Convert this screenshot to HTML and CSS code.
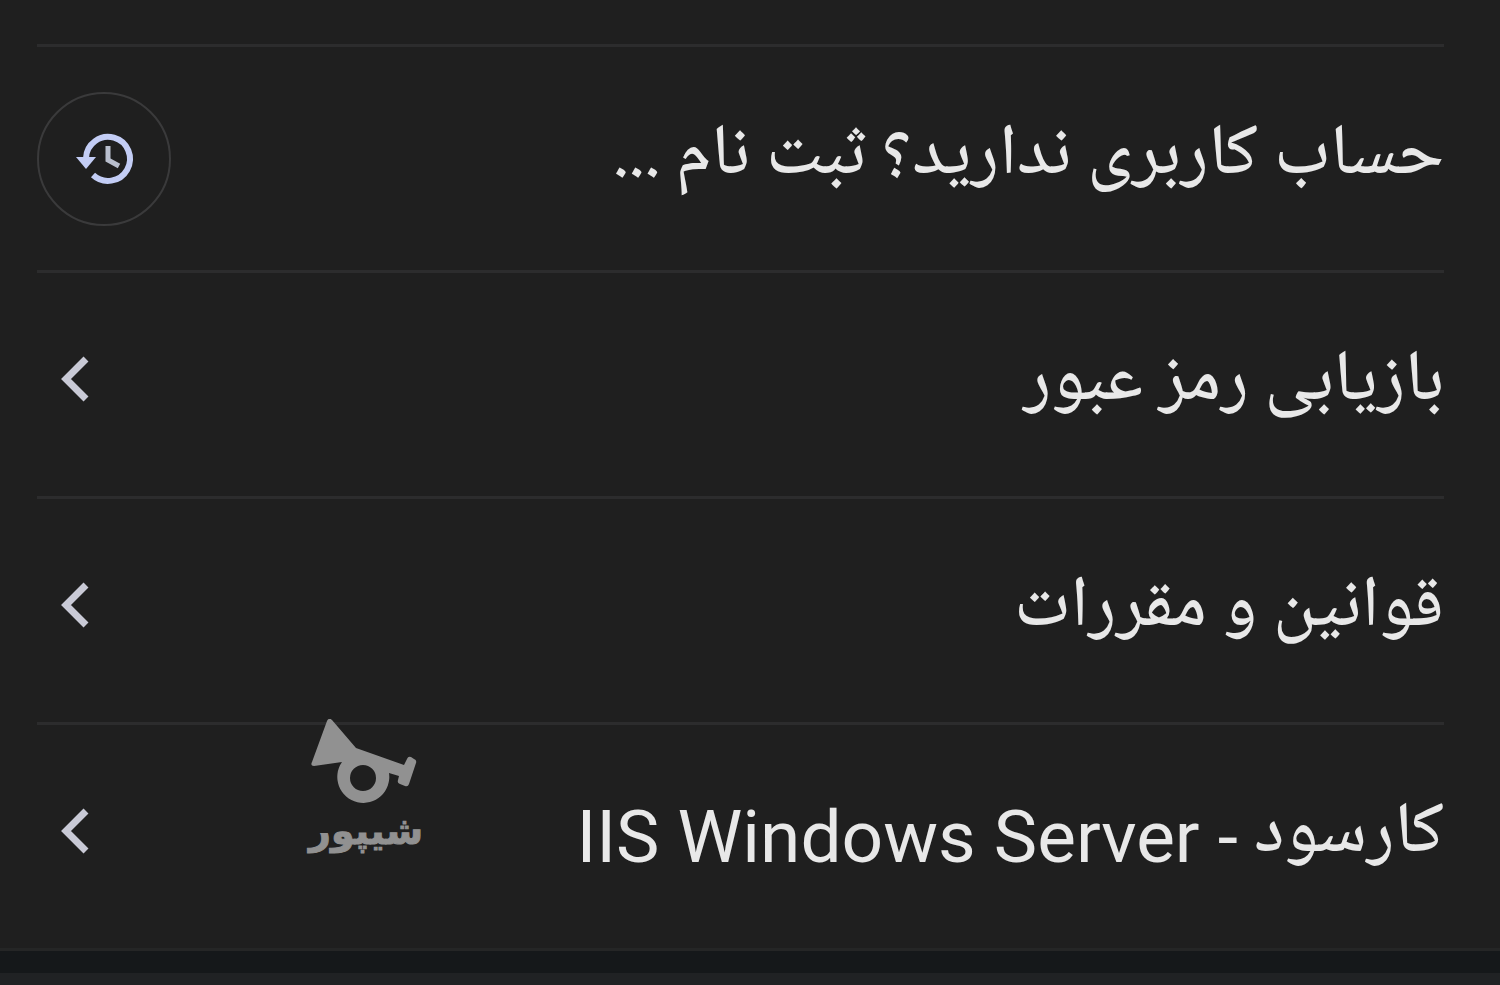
FILE: index.html
```html
<!DOCTYPE html>
<html lang="fa" dir="rtl">
<head>
    <meta charset="UTF-8">
    <meta name="viewport" content="width=device-width, initial-scale=1.0">
    <title>کارسود</title>
    <link rel="stylesheet" href="styles.css">
</head>
<body>
    <main class="results">
        <ul class="link-list">
            <li class="link-item">
                <a class="link-text" href="#">حساب کاربری ندارید؟ ثبت نام ...</a>
                <button class="history-btn" type="button" aria-label="تاریخچه">
                    <svg width="64" height="64" viewBox="-2 1 64 64" fill="none">
                        <path d="M12 32A22 22 0 1 1 19 49" stroke="#c3cdf5" stroke-width="6"/>
                        <path d="M2 31h20L12 43z" fill="#c3cdf5"/>
                        <path d="M34 20v14l11 6" stroke="#b9bfcd" stroke-width="5"/>
                    </svg>
                </button>
            </li>
            <li class="link-item">
                <a class="link-text" href="#">بازیابی رمز عبور</a>
                <svg class="chevron" width="32" height="48" viewBox="0 0 32 48"><path d="M27 4L7 24l20 20"/></svg>
            </li>
            <li class="link-item">
                <a class="link-text" href="#">قوانین و مقررات</a>
                <svg class="chevron" width="32" height="48" viewBox="0 0 32 48"><path d="M27 4L7 24l20 20"/></svg>
            </li>
            <li class="link-item">
                <a class="link-text" href="#">
                    <span>کارسود</span>
                    <span class="latin">- IIS Windows Server</span>
                </a>
                <svg class="chevron" width="32" height="48" viewBox="0 0 32 48"><path d="M27 4L7 24l20 20"/></svg>
                <!-- لوگوی شیپور -->
                <div class="watermark">
                    <svg width="108" height="88" viewBox="-1 0 108 88">
                        <path d="M17 2q2-4 5-1l24 28 48 17 3-6q1-3 4-2l3 2q3 1 2 4l-7 21q-1 3-4 2l-5-2q-3-1-2-4l1-4-10-3A26 26 0 1 1 32 43L4 47q-4 0-2-4zM53 46a13 13 0 1 0 0 26 13 13 0 1 0 0-26z" fill="#919191" fill-rule="evenodd"/>
                    </svg>
                    <span class="watermark-text">شیپور</span>
                </div>
            </li>
        </ul>
    </main>
    <footer class="bottom-bar"></footer>
</body>
</html>
```
FILE: styles.css
```css
* {
    margin: 0;
    padding: 0;
    box-sizing: border-box;
}

body {
    min-height: 100vh;
    display: flex;
    flex-direction: column;
    background: #1f1f1f;
    color: #e8e8e8;
    font-family: "Noto Naskh Arabic UI", "Noto Naskh Arabic", "Noto Sans Arabic", Roboto, sans-serif;
}

.results {
    padding: 44px 56px 0 37px;
}

.link-list {
    list-style: none;
}

.link-item {
    position: relative;
    display: flex;
    justify-content: space-between;
    align-items: center;
    height: 226px;
    border-top: 3px solid #2c2c2d;
}

.link-text {
    display: flex;
    align-items: center;
    gap: 16px;
    padding-bottom: 8px;
    color: inherit;
    font-size: 72px;
    font-weight: 500;
    line-height: 80px;
    text-decoration: none;
    white-space: nowrap;
}

.latin {
    padding-top: 8px;
    font-family: Roboto, sans-serif;
    font-size: 73px;
    font-weight: 400;
}

.history-btn {
    width: 134px;
    height: 134px;
    display: flex;
    align-items: center;
    justify-content: center;
    background: none;
    border: 2px solid #3a3a3b;
    border-radius: 50%;
    cursor: pointer;
}

.chevron {
    margin: 0 0 12px 22px;
    fill: none;
    stroke: #c9cad6;
    stroke-width: 7;
}

.watermark {
    position: absolute;
    left: 272px;
    top: -6px;
    display: flex;
    flex-direction: column;
    align-items: flex-end;
    color: #919191;
}

.watermark-text {
    font-family: "DejaVu Sans", sans-serif;
    font-size: 38px;
    font-weight: bold;
    line-height: 48px;
    -webkit-text-stroke: 1px #919191;
}

.bottom-bar {
    flex: 1;
    background: #15181a;
    border-top: 3px solid #252626;
    border-bottom: 12px solid #202224;
}
```
